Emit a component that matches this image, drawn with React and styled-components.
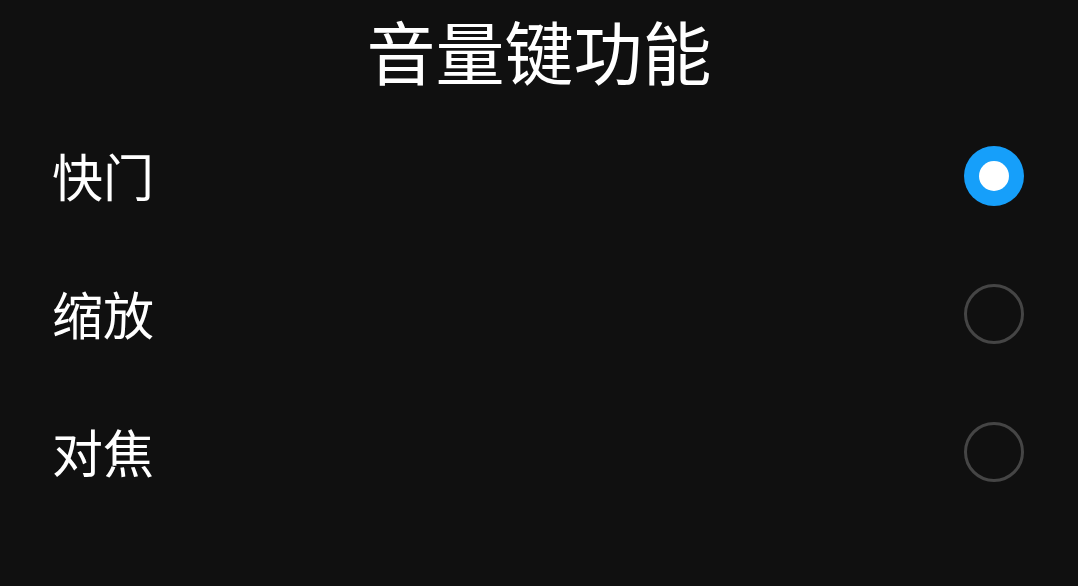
import { useState } from 'react';
import styled, { createGlobalStyle } from 'styled-components';

const GlobalStyle = createGlobalStyle`
	html, body {
		margin: 0;
		padding: 0;
		background: #101010;
	}

	body {
		font-family: 'Noto Sans CJK SC', 'Noto Sans', sans-serif;
		color: #fff;
	}
`;

const OPTIONS = ['快门', '缩放', '对焦'];

const Page = styled.div`
	width: 1078px;
	height: 586px;
	background: #101010;
	overflow: hidden;
`;

const Title = styled.h1`
	margin: 0 0 6px;
	height: 101px;
	display: flex;
	align-items: center;
	justify-content: center;
	font-size: 69px;
	font-weight: 400;
	line-height: 1;
`;

const List = styled.div`
	display: flex;
	flex-direction: column;
	padding: 0 54px 0 52px;
`;

const Row = styled.div`
	height: 138px;
	display: flex;
	align-items: center;
	justify-content: space-between;
	cursor: pointer;
`;

const Label = styled.span`
	font-size: 51px;
	line-height: 1;
	margin-top: -2px;
`;

const Radio = styled.span`
	box-sizing: border-box;
	width: 60px;
	height: 60px;
	border-radius: 50%;
	display: flex;
	align-items: center;
	justify-content: center;
	background: ${({ checked }) => (checked ? '#169ffa' : 'transparent')};
	border: ${({ checked }) => (checked ? 'none' : '3px solid #454545')};

	&::after {
		content: '';
		display: ${({ checked }) => (checked ? 'block' : 'none')};
		width: 30px;
		height: 30px;
		border-radius: 50%;
		background: #fff;
	}
`;

export default function App() {
	const [selected, setSelected] = useState(0);

	return (
		<Page>
			<GlobalStyle />
			<Title>音量键功能</Title>
			<List>
				{OPTIONS.map((option, i) => (
					<Row key={option} onClick={() => setSelected(i)}>
						<Label>{option}</Label>
						<Radio checked={selected === i} />
					</Row>
				))}
			</List>
		</Page>
	);
}
